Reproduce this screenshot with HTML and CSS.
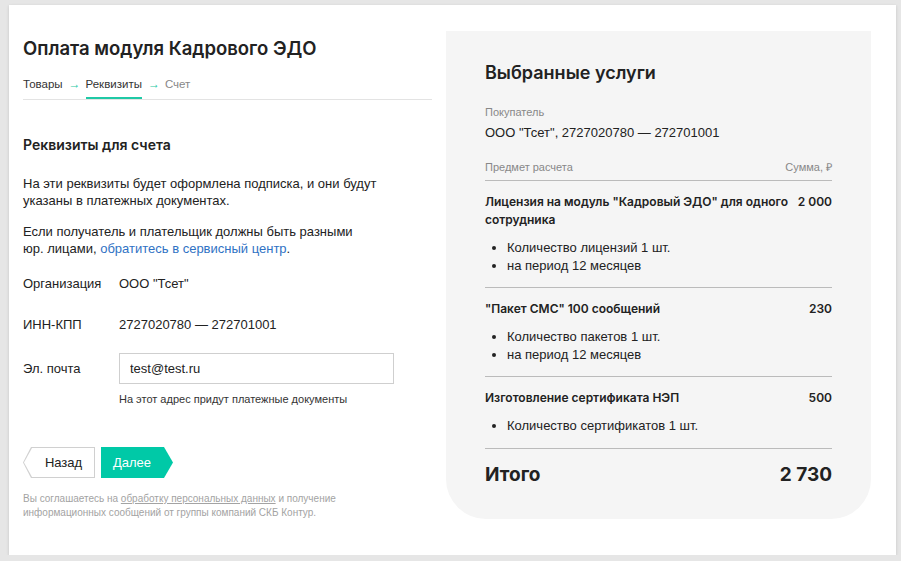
FILE: index.html
```html
<!DOCTYPE html>
<html lang="ru">
<head>
    <meta charset="UTF-8">
    <title>Оплата модуля Кадрового ЭДО</title>
    <link rel="stylesheet" href="styles.css">
</head>
<body>
    <div class="page">
        <div class="form-col">
            <h1 class="title">Оплата модуля Кадрового ЭДО</h1>

            <div class="steps">
                <span class="step">Товары</span>
                <span class="arrow">&rarr;</span>
                <span class="step active">Реквизиты</span>
                <span class="arrow">&rarr;</span>
                <span class="step muted">Счет</span>
            </div>

            <h2 class="subtitle">Реквизиты для счета</h2>

            <p class="text">На эти реквизиты будет оформлена подписка, и они будут<br>указаны в платежных документах.</p>
            <p class="text">Если получатель и плательщик должны быть разными<br>юр. лицами, <a class="link" href="#">обратитесь в сервисный центр</a>.</p>

            <div class="field">
                <div class="label">Организация</div>
                <div class="value">ООО "Тсет"</div>
            </div>
            <div class="field">
                <div class="label">ИНН-КПП</div>
                <div class="value">2727020780 — 272701001</div>
            </div>
            <div class="field field-email">
                <div class="label">Эл. почта</div>
                <div class="value">
                    <input class="input" type="text" value="test@test.ru">
                    <div class="hint">На этот адрес придут платежные документы</div>
                </div>
            </div>

            <div class="buttons">
                <button class="btn btn-back"><span>Назад</span></button>
                <button class="btn btn-next"><span>Далее</span></button>
            </div>

            <p class="agree">Вы соглашаетесь на <a href="#">обработку персональных данных</a> и получение<br>информационных сообщений от группы компаний СКБ Контур.</p>
        </div>

        <div class="summary">
            <h2 class="summary-title">Выбранные услуги</h2>

            <div class="caption">Покупатель</div>
            <div class="buyer">ООО "Тсет", 2727020780 — 272701001</div>

            <div class="table-head">
                <span>Предмет расчета</span>
                <span>Сумма, ₽</span>
            </div>

            <div class="item">
                <div class="item-head">
                    <span>Лицензия на модуль "Кадровый ЭДО" для одного сотрудника</span>
                    <span class="price">2 000</span>
                </div>
                <ul class="item-list">
                    <li>Количество лицензий 1 шт.</li>
                    <li>на период 12 месяцев</li>
                </ul>
            </div>

            <div class="item">
                <div class="item-head">
                    <span>"Пакет СМС" 100 сообщений</span>
                    <span class="price">230</span>
                </div>
                <ul class="item-list">
                    <li>Количество пакетов 1 шт.</li>
                    <li>на период 12 месяцев</li>
                </ul>
            </div>

            <div class="item">
                <div class="item-head">
                    <span>Изготовление сертификата НЭП</span>
                    <span class="price">500</span>
                </div>
                <ul class="item-list">
                    <li>Количество сертификатов 1 шт.</li>
                </ul>
            </div>

            <div class="total">
                <span>Итого</span>
                <span>2 730</span>
            </div>
        </div>
    </div>
</body>
</html>
```

FILE: styles.css
```css
body {
    margin: 0;
    background-color: #e6e6e6;
    font-family: "Liberation Sans", Arial, sans-serif;
    color: #222;
}

.page {
    display: flex;
    gap: 14px;
    margin: 5px 5px 0 9px;
    height: 550px;
    padding: 0 25px 0 14px;
    background-color: #fff;
    box-shadow: 0 1px 3px rgba(0, 0, 0, 0.15);
    box-sizing: border-box;
}

/* left column */

.form-col {
    width: 409px;
    padding-top: 31px;
}

.title {
    margin: 0;
    font-family: Inter, sans-serif;
    font-size: 18.5px;
    font-weight: 600;
    line-height: 24px;
}

.steps {
    display: flex;
    align-items: center;
    margin-top: 13px;
    font-size: 11.5px;
    line-height: 16px;
    border-bottom: 1px solid #e3e3e3;
}

.step {
    padding: 3px 0 7px;
    color: #333;
}

.step.active {
    box-shadow: inset 0 -2px 0 #1fc9a6;
}

.step.muted {
    color: #888;
}

.arrow {
    margin: 0 5px 0 6px;
    padding: 3px 0 7px;
    color: #1fc9a6;
    font-size: 12px;
}

.subtitle {
    margin: 35px 0 0;
    font-family: Inter, sans-serif;
    font-size: 14px;
    font-weight: 600;
    line-height: 20px;
}

.text {
    margin: 20px 0 0;
    font-size: 13px;
    line-height: 17px;
}

.text + .text {
    margin-top: 14px;
}

.link {
    color: #3072c4;
    text-decoration: none;
}

.field {
    display: flex;
    margin-top: 18px;
    font-size: 13px;
    line-height: 17px;
}

.field + .field {
    margin-top: 24px;
}

.field-email {
    margin-top: 20px !important;
}

.label {
    width: 96px;
}

.field-email .label {
    padding-top: 7px;
}

.input {
    display: block;
    width: 275px;
    height: 31px;
    padding: 0 10px;
    box-sizing: border-box;
    border: 1px solid #cfcfcf;
    font-family: "Liberation Sans", Arial, sans-serif;
    font-size: 13px;
    color: #222;
    outline: none;
}

.hint {
    margin-top: 8px;
    font-size: 11px;
    line-height: 14px;
    color: #333;
}

.buttons {
    display: flex;
    gap: 6px;
    margin-top: 41px;
}

.btn {
    position: relative;
    height: 31px;
    width: 72px;
    border: 0;
    padding: 0;
    background: none;
    font-family: "Liberation Sans", Arial, sans-serif;
    font-size: 13px;
    cursor: pointer;
}

.btn span {
    position: relative;
    z-index: 1;
}

.btn-back {
    padding-left: 9px;
    color: #222;
}

.btn-back::before,
.btn-back::after {
    content: "";
    position: absolute;
    clip-path: polygon(8px 0, 100% 0, 100% 100%, 8px 100%, 0 50%);
}

.btn-back::before {
    inset: 0;
    background: #d0d0d0;
}

.btn-back::after {
    inset: 1px;
    background: #fff;
}

.btn-next {
    padding-right: 10px;
    color: #fff;
    background: #00c9a7;
    clip-path: polygon(0 0, 63px 0, 100% 50%, 63px 100%, 0 100%);
}

.agree {
    margin: 14px 0 0;
    font-size: 10px;
    line-height: 14px;
    color: #a3a3a3;
}

.agree a {
    color: #a3a3a3;
}

/* right column */

.summary {
    width: 425px;
    height: 488px;
    margin-top: 26px;
    padding: 28px 39px 0;
    box-sizing: border-box;
    background-color: #f5f5f5;
    border-radius: 0 0 40px 40px;
}

.summary-title {
    margin: 0;
    font-family: Inter, sans-serif;
    font-size: 18px;
    font-weight: 600;
    line-height: 28px;
}

.caption {
    margin-top: 18px;
    font-size: 11px;
    line-height: 14px;
    color: #888;
}

.buyer {
    margin-top: 5px;
    font-size: 13px;
    line-height: 18px;
}

.table-head {
    display: flex;
    justify-content: space-between;
    margin-top: 18px;
    padding-bottom: 6px;
    font-size: 11px;
    line-height: 14px;
    color: #888;
    border-bottom: 1px solid #bbb;
}

.item {
    padding: 12px 0 13px;
    border-bottom: 1px solid #bbb;
}

.item-head {
    display: flex;
    justify-content: space-between;
    gap: 6px;
    font-family: Inter, sans-serif;
    font-size: 12px;
    font-weight: 600;
    line-height: 18px;
}

.price {
    white-space: nowrap;
}

.item-list {
    margin: 10px 0 0;
    padding-left: 22px;
    font-size: 13px;
    line-height: 17.5px;
}

.total {
    display: flex;
    justify-content: space-between;
    margin-top: 13px;
    font-family: Inter, sans-serif;
    font-size: 19px;
    font-weight: 700;
    line-height: 26px;
}
```
